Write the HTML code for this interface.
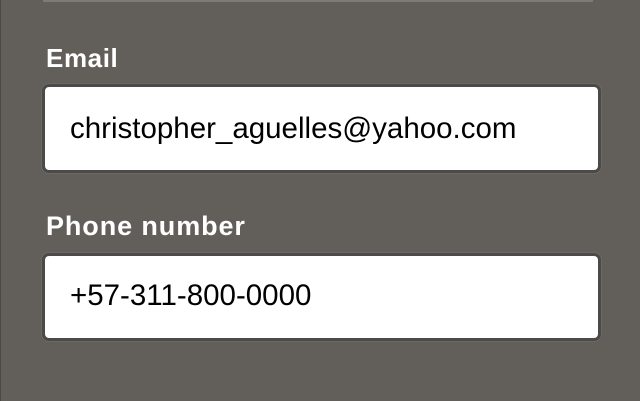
<!DOCTYPE html>
<html><head><style>
html,body{margin:0;padding:0;}
body{width:640px;height:401px;background:#625e5a;position:relative;overflow:hidden;font-family:"Liberation Sans",Arial,sans-serif;border-left:1px solid #4a4745;box-sizing:border-box;}
.line{position:absolute;left:42px;top:0;width:550px;height:2px;background:#7e7a76;}
.lbl{position:absolute;left:45px;color:#fff;font-weight:bold;font-size:26px;letter-spacing:0.6px;}
.box{position:absolute;left:41px;width:553px;background:#fff;border:3px solid #4b4a49;border-radius:7px;box-shadow:0 0 0 1px #6c6865;}
.box span{position:absolute;left:25px;font-size:29.5px;color:#000;}
</style></head><body>
<div class="line"></div>
<div class="lbl" style="top:43px">Email</div>
<div class="box" style="top:84px;height:83px"><span style="top:25px">christopher_aguelles@yahoo.com</span></div>
<div class="lbl" style="top:211px;font-size:27px;letter-spacing:0.9px">Phone number</div>
<div class="box" style="top:253px;height:82px"><span style="top:23px">+57-311-800-0000</span></div>
</body></html>
